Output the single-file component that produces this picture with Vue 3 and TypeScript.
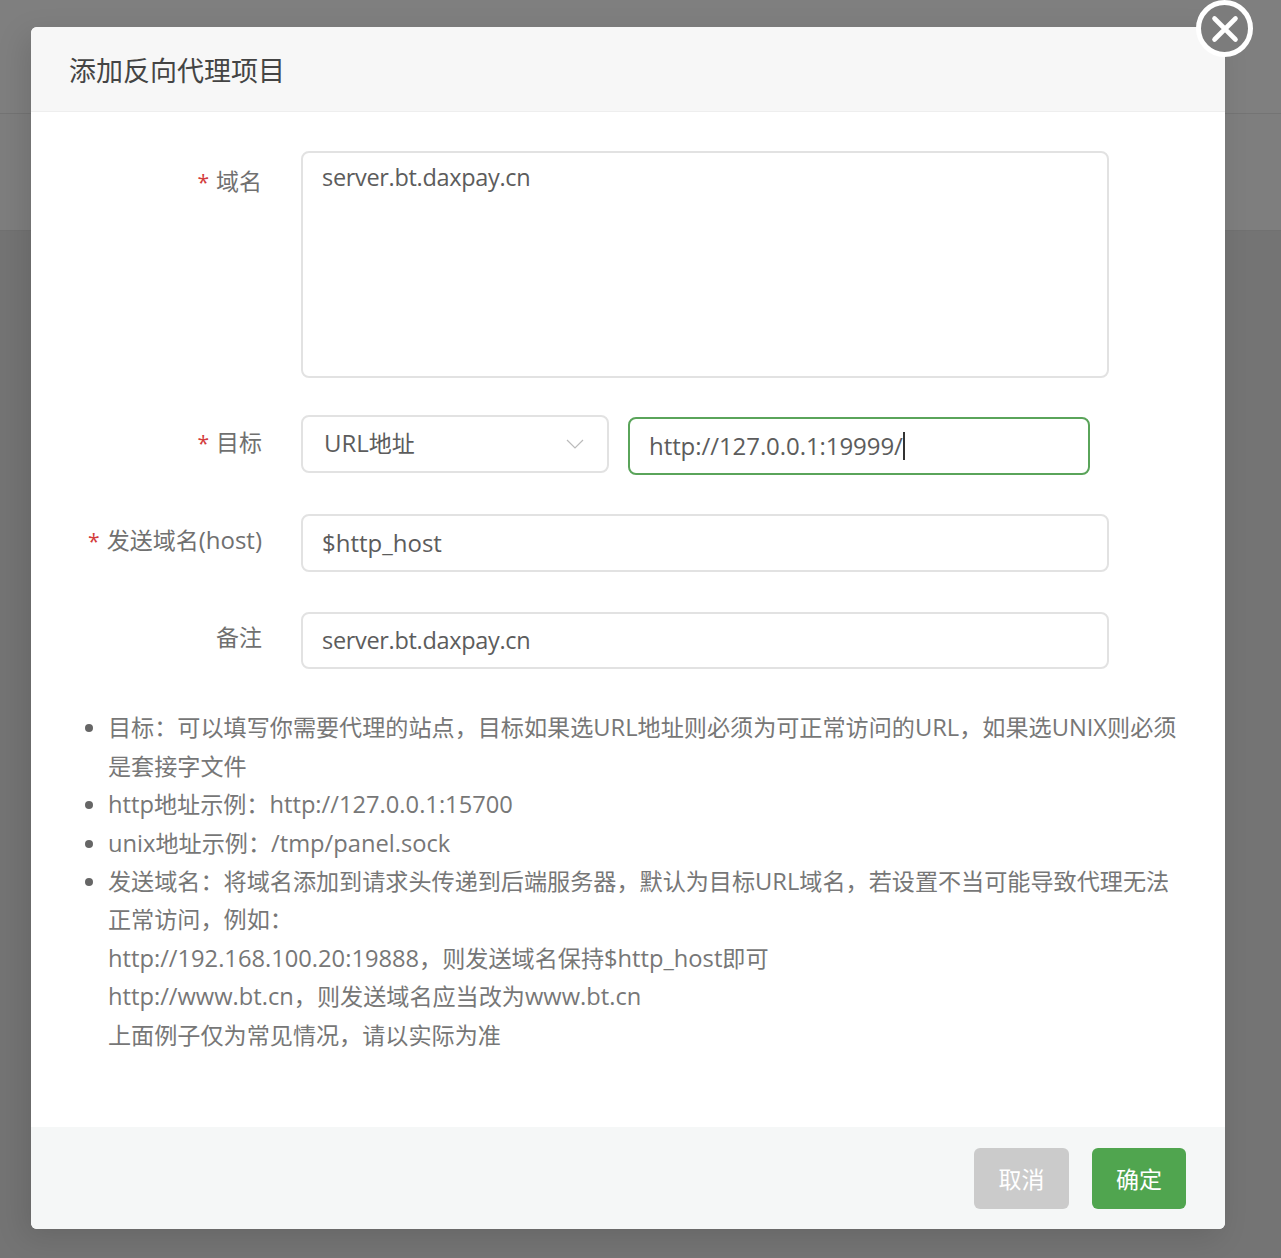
<script setup lang="ts">
const notes: string[][] = [
  ['目标：可以填写你需要代理的站点，目标如果选URL地址则必须为可正常访问的URL，如果选UNIX则必须', '是套接字文件'],
  ['http地址示例：http://127.0.0.1:15700'],
  ['unix地址示例：/tmp/panel.sock'],
  [
    '发送域名：将域名添加到请求头传递到后端服务器，默认为目标URL域名，若设置不当可能导致代理无法',
    '正常访问，例如：',
    'http://192.168.100.20:19888，则发送域名保持$http_host即可',
    'http://www.bt.cn，则发送域名应当改为www.bt.cn',
    '上面例子仅为常见情况，请以实际为准',
  ],
]

// Latin runs are drawn a little larger than CJK runs, as in the reference font pairing.
function runs(text: string): { text: string; latin: boolean }[] {
  return (text.match(/[\x00-\x7f]+|[^\x00-\x7f]+/g) ?? []).map((part) => ({
    text: part,
    latin: part.charCodeAt(0) < 128,
  }))
}
</script>

<template>
  <div class="page">
    <div class="backdrop">
      <div class="band band-a"></div>
      <div class="band band-b"></div>
    </div>
    <div class="modal">
      <button class="close" aria-label="关闭">
        <svg width="28" height="28" viewBox="0 0 28 28">
          <path d="M3.5 3.5 L24.5 24.5 M24.5 3.5 L3.5 24.5" stroke="#fff" stroke-width="4.6" stroke-linecap="round" />
        </svg>
      </button>
      <header class="head">添加反向代理项目</header>
      <div class="body">
        <div class="row first">
          <label class="label"><span class="star">*</span>域名</label>
          <div class="field area tight">server.bt.daxpay.cn</div>
        </div>
        <div class="row target">
          <label class="label"><span class="star">*</span>目标</label>
          <div class="field select">
            <span>URL<span class="cjk">地址</span></span>
            <svg width="18" height="10" viewBox="0 0 18 10">
              <path d="M1 1 L9 9 L17 1" fill="none" stroke="#bbb" stroke-width="1.2" />
            </svg>
          </div>
          <div class="field url"><span>http://127.0.0.1:19999/</span><i class="caret"></i></div>
        </div>
        <div class="row host">
          <label class="label"><span class="star">*</span>发送域名<span class="en">(host)</span></label>
          <div class="field single">$http_host</div>
        </div>
        <div class="row memo">
          <label class="label">备注</label>
          <div class="field single tight">server.bt.daxpay.cn</div>
        </div>
        <ul class="notes">
          <li v-for="(lines, i) in notes" :key="i">
            <div v-for="line in lines" :key="line">
              <span v-for="(run, j) in runs(line)" :key="j" :class="{ en: run.latin }">{{ run.text }}</span>
            </div>
          </li>
        </ul>
      </div>
      <footer class="foot">
        <button class="btn cancel">取消</button>
        <button class="btn ok">确定</button>
      </footer>
    </div>
  </div>
</template>

<style>
html, body { margin: 0; background: #747474; }
</style>

<style scoped>
.page {
  position: relative;
  width: 1281px;
  height: 1258px;
  overflow: hidden;
  padding: 27px 0 0 31px;
  box-sizing: border-box;
  font-family: "Open Sans", "Noto Sans CJK SC", sans-serif;
  background: #747474;
}
.backdrop { position: absolute; inset: 0; }
.band { position: absolute; left: 0; right: 0; }
.band-a { top: 0; height: 113px; background: #7f7f7f; border-bottom: 1px solid #747474; }
.band-b { top: 114px; height: 116px; background: #7e7e7e; border-bottom: 1px solid #717171; }
.modal {
  position: relative;
  width: 1194px;
  height: 1202px;
  background: #fff;
  border-radius: 6px;
  box-shadow: -6px 8px 30px rgba(0, 0, 0, 0.12);
  display: flex;
  flex-direction: column;
}
.close {
  position: absolute;
  top: -27px;
  right: -28px;
  width: 57px;
  height: 57px;
  box-sizing: border-box;
  padding: 0;
  border: 5px solid #fff;
  border-radius: 50%;
  background: #7c7c7c;
  display: flex;
  align-items: center;
  justify-content: center;
}
.head {
  height: 84px;
  box-sizing: content-box;
  padding-left: 38px;
  line-height: 88px;
  font-size: 27px;
  color: #444;
  background: #f7f7f7;
  border-bottom: 1px solid #eee;
  border-radius: 6px 6px 0 0;
}
.body { flex: 1; padding-top: 39px; }
.row { display: flex; align-items: flex-start; }
.row.target { margin-top: 37px; height: 62px; }
.row.host { margin-top: 37px; }
.row.memo { margin-top: 40px; }
.label {
  width: 231px;
  flex: none;
  text-align: right;
  font-size: 23px;
  line-height: 58px;
  color: #707070;
  white-space: nowrap;
}
.label .en { font-size: 24px; }
.first .label { line-height: 60px; }
.row.target .label { margin-top: -2px; }
.row.host .label { margin-top: -3px; }
.row.memo .label { margin-top: -4px; }
.star {
  color: #d33c3c;
  font-size: 21px;
  margin-right: 7px;
}
.field {
  margin-left: 39px;
  box-sizing: border-box;
  border: 2px solid #e2e2e2;
  border-radius: 8px;
  background: #fff;
  font-size: 24px;
  color: #5c5c5c;
  white-space: nowrap;
}
.tight { font-size: 23.5px; letter-spacing: -0.32px; }
.area {
  width: 808px;
  height: 227px;
  padding: 7px 19px;
  line-height: 34px;
}
.single {
  width: 808px;
  height: 58px;
  padding-left: 19px;
  line-height: 53px;
}
.memo .single { height: 57px; line-height: 52px; }
.select {
  width: 308px;
  height: 58px;
  padding: 0 23px 2px 21px;
  line-height: 54px;
  display: flex;
  align-items: center;
  justify-content: space-between;
}
.select svg { margin-top: 2px; }
.cjk { font-size: 23px; }
.url {
  margin-left: 19px;
  margin-top: 2px;
  width: 462px;
  height: 58px;
  padding-left: 19px;
  padding-bottom: 2px;
  border-color: #5aa45a;
  display: flex;
  align-items: center;
}
.url span { letter-spacing: -0.07px; }
.caret {
  display: block;
  width: 2px;
  height: 28px;
  margin-top: 2px;
  background: #333;
}
.notes {
  margin: 39.4px 0 0;
  padding: 0 40px 0 77px;
  font-size: 23.12px;
  line-height: 38.4px;
  color: #777;
  white-space: nowrap;
}
.notes .en { font-size: 23.7px; }
.notes li::marker { color: #666; }
.foot {
  height: 102px;
  background: #f5f7f7;
  border-radius: 0 0 6px 6px;
  display: flex;
  justify-content: flex-end;
  align-items: flex-start;
  gap: 23px;
  padding: 21px 39px 0 0;
  box-sizing: border-box;
}
.btn {
  height: 61px;
  border: 0;
  border-radius: 6px;
  color: #fff;
  font-family: inherit;
  font-size: 23px;
  padding: 0 0 2px;
}
.cancel { width: 95px; background: #cbcbcb; }
.ok { width: 94px; background: #50a54f; }
</style>
